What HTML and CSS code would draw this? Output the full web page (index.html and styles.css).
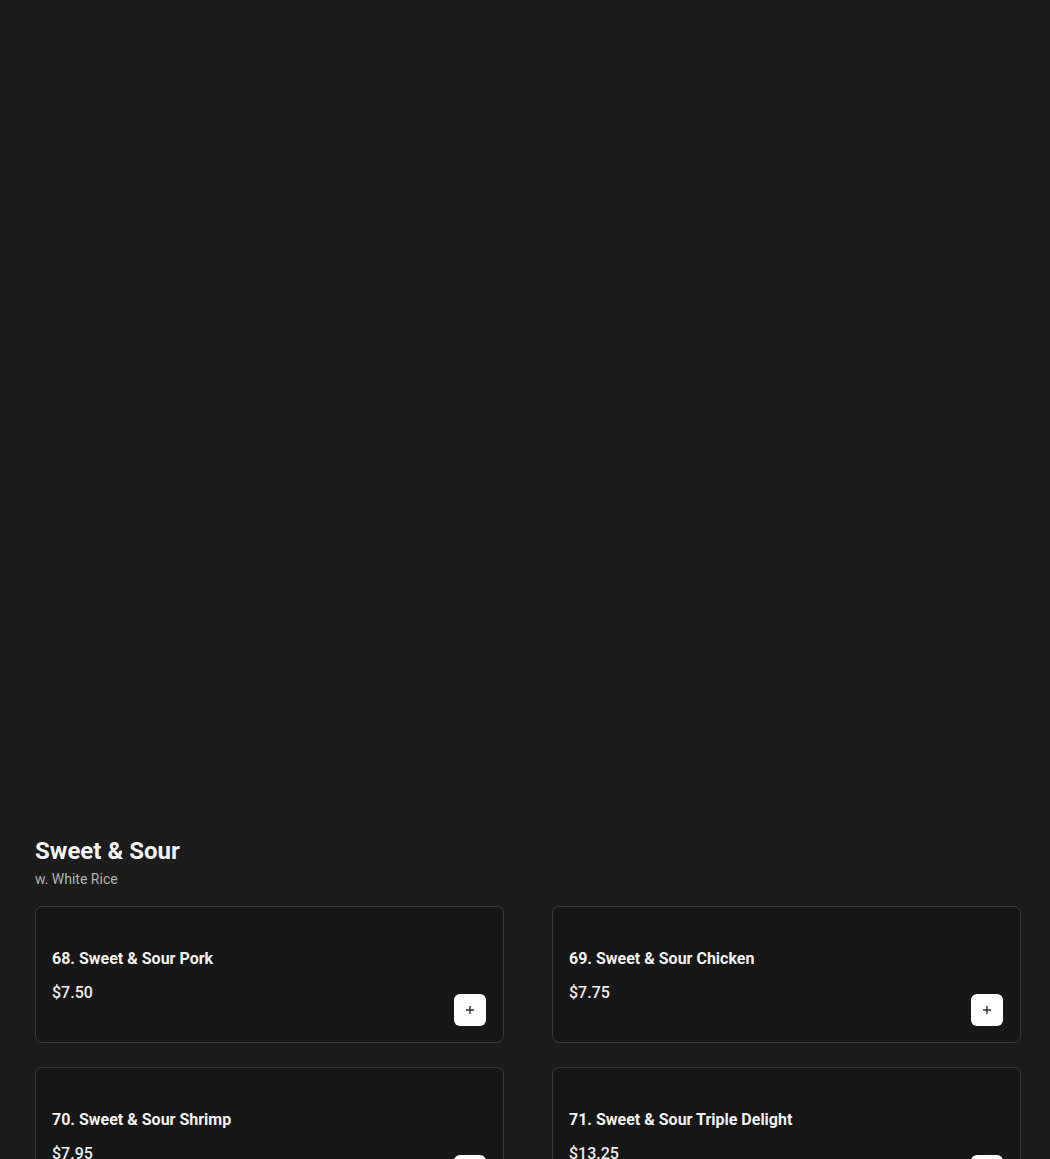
FILE: index.html
```html
<html lang="en">
  <head>
    <meta charset="UTF-8" />
    <meta name="viewport" content="width=device-width, initial-scale=1.0" />
    <title>Menu</title>
    <link rel="stylesheet" href="styles.css">
  </head>
  <body>
    <div class="banner"></div>

    <section class="category">
      <h2>Sweet &amp; Sour</h2>
      <p class="note">w. White Rice</p>

      <ul class="items">
        <li class="item">
          <div class="info">
            <div class="name">68. Sweet &amp; Sour Pork</div>
            <div class="price">$7.50</div>
          </div>
          <button class="add" aria-label="Add">
            <svg width="10" height="10" viewBox="0 0 10 10"><path d="M5 1v8M1 5h8" stroke="#2b2b2b" stroke-width="1.4" /></svg>
          </button>
        </li>
        <li class="item">
          <div class="info">
            <div class="name">69. Sweet &amp; Sour Chicken</div>
            <div class="price">$7.75</div>
          </div>
          <button class="add" aria-label="Add">
            <svg width="10" height="10" viewBox="0 0 10 10"><path d="M5 1v8M1 5h8" stroke="#2b2b2b" stroke-width="1.4" /></svg>
          </button>
        </li>
        <li class="item">
          <div class="info">
            <div class="name">70. Sweet &amp; Sour Shrimp</div>
            <div class="price">$7.95</div>
          </div>
          <button class="add" aria-label="Add">
            <svg width="10" height="10" viewBox="0 0 10 10"><path d="M5 1v8M1 5h8" stroke="#2b2b2b" stroke-width="1.4" /></svg>
          </button>
        </li>
        <li class="item">
          <div class="info">
            <div class="name">71. Sweet &amp; Sour Triple Delight</div>
            <div class="price">$13.25</div>
          </div>
          <button class="add" aria-label="Add">
            <svg width="10" height="10" viewBox="0 0 10 10"><path d="M5 1v8M1 5h8" stroke="#2b2b2b" stroke-width="1.4" /></svg>
          </button>
        </li>
      </ul>
    </section>
  </body>
</html>
```

FILE: styles.css
```css
body {
  background: #1c1c1c;
  margin: 0;
  padding: 0 29px 0 35px;
  font-family: Roboto, "Liberation Sans", sans-serif;
  color: #f2f2f2;
}
.banner {
  height: 836px;
}
.category h2 {
  margin: 0;
  font-size: 24px;
  line-height: 30px;
  font-weight: 700;
  color: #f5f5f5;
}
.note {
  margin: 0;
  font-size: 14px;
  line-height: 26px;
  color: #b3b3b3;
}
.items {
  list-style: none;
  padding: 0;
  margin: 14px 0 0;
  display: grid;
  grid-template-columns: 1fr 1fr;
  column-gap: 48px;
  row-gap: 24px;
}
.item {
  display: flex;
  justify-content: space-between;
  align-items: flex-end;
  padding: 16px 17px 16px 16px;
  background: #171717;
  border: 1px solid #3a3a3a;
  border-radius: 7px;
}
.info {
  padding: 26px 0 23px;
}
.name {
  font-size: 16px;
  line-height: 20px;
  font-weight: 700;
}
.price {
  margin-top: 14px;
  font-size: 16px;
  line-height: 20px;
  font-weight: 500;
  color: #ececec;
}
.add {
  width: 32px;
  height: 32px;
  padding: 0;
  border: 0;
  border-radius: 6px;
  background: white;
  display: flex;
  align-items: center;
  justify-content: center;
  cursor: pointer;
}
```
